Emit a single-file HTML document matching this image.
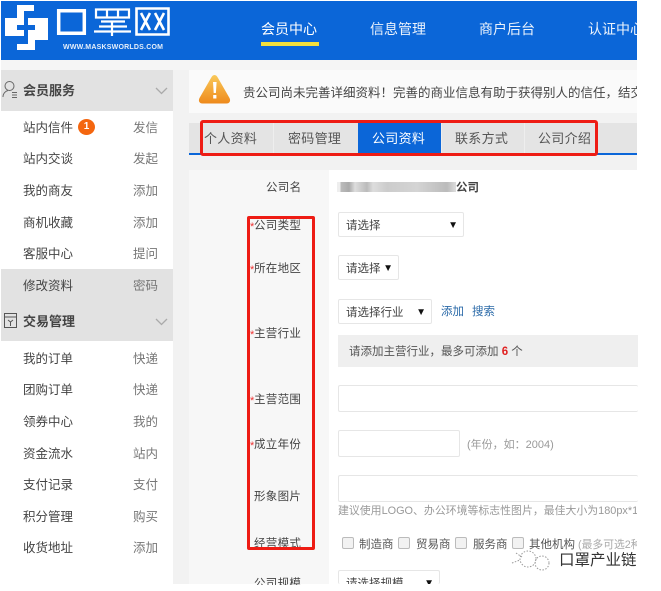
<!DOCTYPE html>
<html lang="zh"><head><meta charset="utf-8"><style>
html,body{margin:0;padding:0;background:#fff;width:661px;height:591px;overflow:hidden}
body{font-family:"Liberation Sans","Noto Sans CJK SC",sans-serif;font-size:12px;color:#444;position:relative}
#w{position:absolute;left:0;top:0;width:661px;height:591px;filter:blur(.35px)}
#w div{position:absolute;white-space:nowrap}
#w .r{left:23px;font-size:12.5px;color:#444;line-height:16px;margin-top:1px}
#w .q{left:133px;font-size:12.5px;color:#777;line-height:16px;margin-top:1px}
#w .h{font-size:13px;font-weight:bold;color:#444;line-height:16px;left:23px;margin-top:1px}
#w .t{top:124px;height:29px;line-height:29px;color:#555;font-size:13px;letter-spacing:.3px}
#w .l{left:254px;font-size:11.5px;color:#444;line-height:14px;letter-spacing:.3px;margin-top:1px}
#w .s{left:250px;color:#e33;font-size:11px;line-height:10px;z-index:5}
#w .sel{background:#fff;border:1px solid #e6e6e6;border-radius:2px;box-sizing:border-box;color:#444;font-size:11.5px;height:25px;line-height:26px;padding-left:7px}
#w .sel b{position:absolute;right:5px;top:0;font-size:10px;font-weight:normal;color:#111}
#w .in{background:#fff;border:1px solid #e6e6e6;box-sizing:border-box;border-radius:2px}
#w .cb{width:10px;height:10px;border:1px solid #bbb;background:#f2f2f2;border-radius:2px;top:537px}
#w .c{top:538px;font-size:11.5px;color:#555;line-height:15px}
</style></head><body><div id="w">
<div style="left:1px;top:1px;width:636px;height:59px;background:#0b66d8"></div>
<svg style="position:absolute;left:0;top:0" width="180" height="60" viewBox="0 0 180 60">
<path fill="#fff" d="M17 5H34V11H24V25H17V30H24V36H5V18H17zM32 18H48V40H35V50H17V44H28V30H35V25H28V18z"/>
<path fill="none" stroke="#fff" stroke-width="3.500" d="M58.700 10.700h25.600v22.600H58.700z"/>
<path fill="none" stroke="#fff" stroke-width="2.200" d="M96 9.500h33v8H96zM107 9v8M118 9v8M101 21.500h24M99 26.500h28M94 31.500h37M112 21v15"/>
<path fill="none" stroke="#fff" stroke-width="2.600" d="M136.500 8.500h32v26h-32zM141 13l9 17M150 13l-9 17M155 13l9 17M164 13l-9 17"/>
<text x="63" y="49" font-family="Liberation Sans" font-size="7" font-weight="bold" fill="#e6effa" textLength="100">WWW.MASKSWORLDS.COM</text>
</svg>
<div style="left:261px;top:20px;color:#fff;font-size:14px;line-height:18px">会员中心</div>
<div style="left:261px;top:42px;width:58px;height:4px;background:#f3e03c"></div>
<div style="left:370px;top:20px;color:#eaf2fc;font-size:14px;line-height:18px">信息管理</div>
<div style="left:479px;top:20px;color:#eaf2fc;font-size:14px;line-height:18px">商户后台</div>
<div style="left:588px;top:20px;width:49px;overflow:hidden;color:#eaf2fc;font-size:14px;line-height:18px">认证中心</div>

<div style="left:173px;top:60px;width:464px;height:524px;background:#f2f2f2"></div>
<div style="left:1px;top:60px;width:636px;height:10px;background:#f5f5f5"></div>
<div style="left:1px;top:70px;width:172px;height:514px;background:#fff"></div>
<div style="left:1px;top:70px;width:172px;height:41px;background:#e2e2e2"></div>
<div style="left:1px;top:269px;width:172px;height:72px;background:#e2e2e2"></div>
<svg style="position:absolute;left:0;top:79px" width="20" height="22"><circle cx="9.500" cy="7" r="4.500" fill="none" stroke="#666"/><path d="M3 18c0-4 3-6 5-6.500M12 13.500h5M12 16h5M12 18.500h5" fill="none" stroke="#666"/></svg>
<div class="h" style="top:82px">会员服务</div>
<svg style="position:absolute;left:155px;top:87px" width="13" height="8"><path d="M1 1l5.500 5.500L12 1" fill="none" stroke="#aaa" stroke-width="1.300"/></svg>
<div class="r" style="top:119px">站内信件</div><div style="left:78px;top:119px;width:17px;height:16px;border-radius:50%;background:#f4660f;color:#fff;font-size:10px;line-height:16px;text-align:center;font-weight:bold">1</div><div class="q" style="top:119px">发信</div>
<div class="r" style="top:150px">站内交谈</div><div class="q" style="top:150px">发起</div>
<div class="r" style="top:182px">我的商友</div><div class="q" style="top:182px">添加</div>
<div class="r" style="top:214px">商机收藏</div><div class="q" style="top:214px">添加</div>
<div class="r" style="top:245px">客服中心</div><div class="q" style="top:245px">提问</div>
<div class="r" style="top:277px">修改资料</div><div class="q" style="top:277px">密码</div>
<svg style="position:absolute;left:3px;top:312px" width="16" height="18"><path d="M1.500 1.500h12v14h-12zM1.500 5h12M5 8l2.500 2L10 8M7.500 10v4" fill="none" stroke="#555"/></svg>
<div class="h" style="top:313px">交易管理</div>
<svg style="position:absolute;left:155px;top:318px" width="13" height="8"><path d="M1 1l5.500 5.500L12 1" fill="none" stroke="#aaa" stroke-width="1.300"/></svg>
<div class="r" style="top:350px">我的订单</div><div class="q" style="top:350px">快递</div>
<div class="r" style="top:381px">团购订单</div><div class="q" style="top:381px">快递</div>
<div class="r" style="top:413px">领券中心</div><div class="q" style="top:413px">我的</div>
<div class="r" style="top:445px">资金流水</div><div class="q" style="top:445px">站内</div>
<div class="r" style="top:476px">支付记录</div><div class="q" style="top:476px">支付</div>
<div class="r" style="top:508px">积分管理</div><div class="q" style="top:508px">购买</div>
<div class="r" style="top:539px">收货地址</div><div class="q" style="top:539px">添加</div>

<div style="left:189px;top:70px;width:448px;height:43px;background:#fafafa"></div>
<svg style="position:absolute;left:198px;top:74px" width="34" height="31"><defs><linearGradient id="g" x1="0" y1="0" x2="0" y2="1"><stop offset="0" stop-color="#f9c95a"/><stop offset="1" stop-color="#ee8a1c"/></linearGradient></defs><path d="M16.500 1c1.500 0 2.500 1 3.500 3l11.500 20c1.500 3 0 5.500-3 5.500H4.500c-3 0-4.500-2.500-3-5.500L13 4c1-2 2-3 3.500-3z" fill="url(#g)"/><path d="M15 8h3.600l-.7 11h-2.200zM15.200 21h3.200v3.500h-3.200z" fill="#fff"/></svg>
<div style="left:243px;top:85px;width:394px;overflow:hidden;font-size:12.5px;line-height:16px;color:#444">贵公司尚未完善详细资料！完善的商业信息有助于获得别人的信任，结交潜在的商业伙伴</div>

<div style="left:189px;top:123px;width:448px;height:30px;background:#e4e4e4"></div>
<div style="left:189px;top:153px;width:448px;height:2px;background:#0b66d8"></div>
<div style="left:273px;top:123px;width:1px;height:30px;background:#eee"></div>
<div style="left:441px;top:123px;width:1px;height:30px;background:#eee"></div>
<div style="left:524px;top:123px;width:1px;height:30px;background:#eee"></div>
<div style="left:358px;top:123px;width:83px;height:32px;background:#0b66d8"></div>
<div class="t" style="left:204px">个人资料</div>
<div class="t" style="left:288px">密码管理</div>
<div class="t" style="left:372px;color:#fff">公司资料</div>
<div class="t" style="left:455px">联系方式</div>
<div class="t" style="left:538px">公司介绍</div>
<div style="left:200px;top:120px;width:398px;height:36px;box-sizing:border-box;border:3px solid #ee1c14;border-radius:3px"></div>

<div style="left:189px;top:170px;width:140px;height:414px;background:#f7f7f7"></div>
<div style="left:329px;top:170px;width:308px;height:414px;background:#fff"></div>

<div class="l" style="left:266px;top:180px">公司名</div>
<div style="left:337px;top:182px;width:119px;height:10px;background:linear-gradient(90deg,#eee 0,#eee 3px,#bbb 4px,#aaa 12px,#ddd 18px,#ccc 24px,#bbb 30px,#ddd 36px,#ccc 50px,#d4d4d4 80px,#bbb 110px,#ddd 119px)"></div>
<div style="left:456px;top:181px;font-size:11.5px;line-height:14px;font-weight:bold;color:#444">公司</div>

<div class="l" style="top:218px">公司类型</div><div class="s" style="top:222px">*</div>
<div class="sel" style="left:338px;top:212px;width:126px">请选择<b>▼</b></div>
<div class="l" style="top:261px">所在地区</div><div class="s" style="top:265px">*</div>
<div class="sel" style="left:338px;top:255px;width:61px">请选择<b>▼</b></div>
<div class="sel" style="left:338px;top:299px;width:94px">请选择行业<b>▼</b></div>
<div style="left:441px;top:305px;font-size:11.5px;line-height:15px;color:#2b6aa8">添加</div>
<div style="left:472px;top:305px;font-size:11.5px;line-height:15px;color:#2b6aa8">搜索</div>
<div class="l" style="top:326px">主营行业</div><div class="s" style="top:330px">*</div>
<div style="left:338px;top:335px;width:300px;height:32px;background:#efefef"></div>
<div style="left:349px;top:345px;font-size:11.5px;line-height:15px;color:#555">请添加主营行业，最多可添加 <b style="color:#e02020">6</b> 个</div>
<div class="l" style="top:392px">主营范围</div><div class="s" style="top:396px">*</div>
<div class="in" style="left:338px;top:385px;width:300px;height:27px;border-right:0"></div>
<div class="l" style="top:437px">成立年份</div><div class="s" style="top:441px">*</div>
<div class="in" style="left:338px;top:430px;width:122px;height:27px"></div>
<div style="left:467px;top:438px;font-size:11px;line-height:15px;color:#999">(年份，如：2004)</div>
<div class="l" style="top:489px">形象图片</div>
<div class="in" style="left:338px;top:475px;width:300px;height:27px;border-right:0"></div>
<div style="left:338px;top:504px;width:299px;overflow:hidden;font-size:10.9px;line-height:15px;color:#999">建议使用LOGO、办公环境等标志性图片，最佳大小为180px*180px</div>
<div class="l" style="top:536px">经营模式</div>
<div class="cb" style="left:342px"></div><div class="c" style="left:359px">制造商</div>
<div class="cb" style="left:398px"></div><div class="c" style="left:416px">贸易商</div>
<div class="cb" style="left:455px"></div><div class="c" style="left:473px">服务商</div>
<div class="cb" style="left:512px"></div><div class="c" style="left:529px">其他机构</div>
<div style="left:578px;top:538px;width:59px;overflow:hidden;font-size:10.8px;line-height:15px;color:#aaa">(最多可选2种)</div>
<div class="l" style="top:576px;height:8px;overflow:hidden;left:254px">公司规模</div>
<div class="sel" style="left:338px;top:570px;width:102px;height:14px;border-bottom:0;overflow:hidden">请选择规模<b>▼</b></div>
<div style="left:247px;top:216px;width:68px;height:334px;box-sizing:border-box;border:3px solid #ee1c14;border-radius:2px"></div>
<svg style="position:absolute;left:510px;top:548px" width="50" height="24"><g fill="none" stroke="#999" stroke-width="1" stroke-dasharray="1.500 1.500"><circle cx="18" cy="11" r="8"/><circle cx="32" cy="15" r="7"/><path d="M2 15l8-3M6 5l6 4"/></g></svg>
<div style="left:559px;top:551px;width:79px;overflow:hidden;font-size:15.5px;line-height:20px;color:#333;text-shadow:0 0 2px #fff,0 0 1px #fff">口罩产业链</div>
</div></body></html>
